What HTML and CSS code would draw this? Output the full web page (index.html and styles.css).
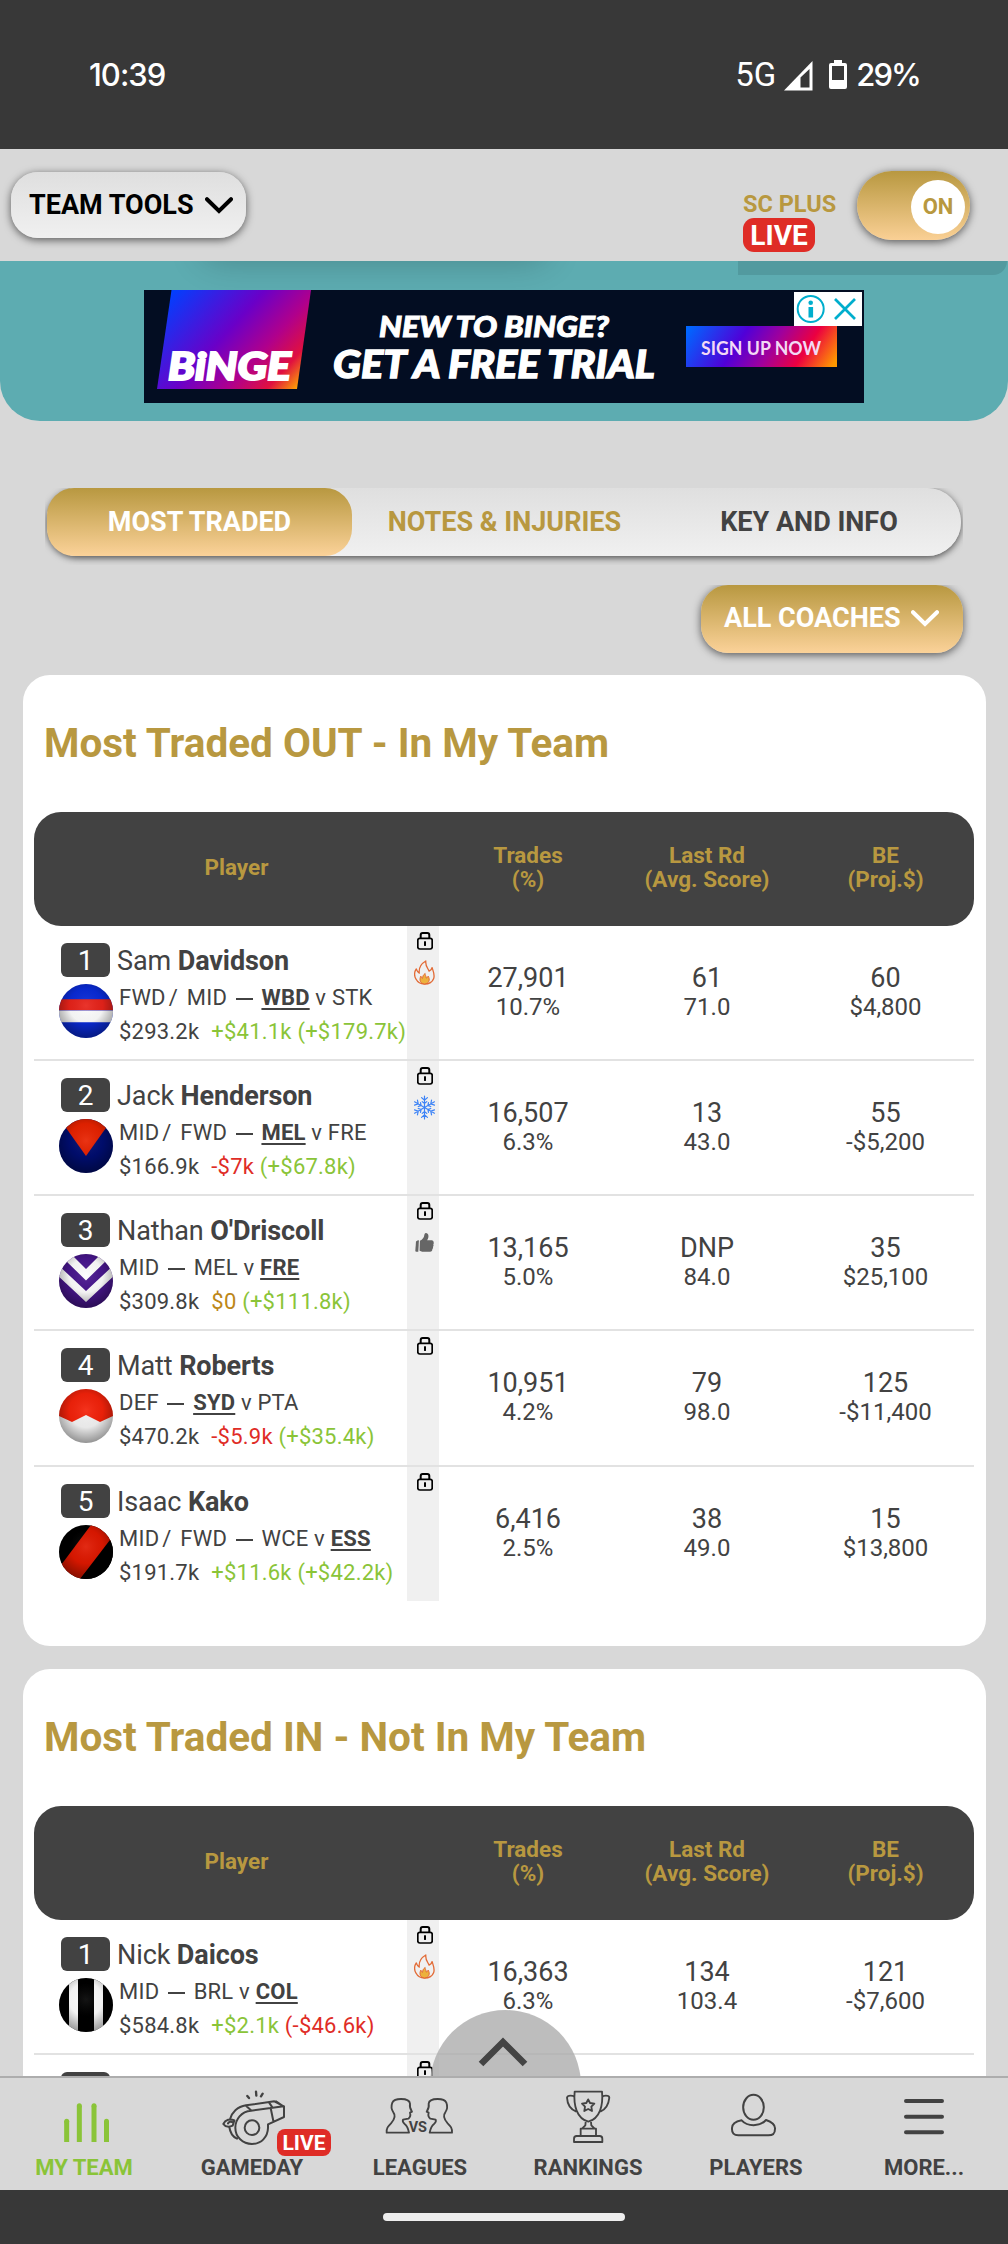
FILE: index.html
```html
<!DOCTYPE html>
<html lang="en">
<head>
<meta charset="utf-8">
<title>Most Traded</title>
<link rel="stylesheet" href="styles.css">
</head>
<body>
<svg class="defs" aria-hidden="true">
  <defs>
    <radialGradient id="shade" cx=".5" cy=".4" r=".62">
      <stop offset="0" stop-color="#fff" stop-opacity=".08"/>
      <stop offset=".5" stop-color="#000" stop-opacity=".05"/>
      <stop offset="1" stop-color="#000" stop-opacity=".42"/>
    </radialGradient>
    <clipPath id="disc"><circle cx="27" cy="27" r="27"/></clipPath>
    <symbol id="chevron" viewBox="0 0 28 17"><path d="M2 2.2 14 14 26 2.2" fill="none" stroke="currentColor" stroke-width="4" stroke-linecap="round"/></symbol>
    <symbol id="lock" viewBox="0 0 16 18">
      <path d="M3.7 6.500V3Q3.700 1 5.700 1H10.300Q12.300 1 12.300 3V6.500" fill="none" stroke="#000" stroke-width="2"/>
      <rect x=".8" y="6.300" width="14.400" height="10.700" rx="2" fill="none" stroke="#000" stroke-width="1.700"/>
      <rect x="7" y="9.300" width="2" height="4.600"/>
    </symbol>
    <symbol id="fire" viewBox="0 0 64 76">
      <path d="M36 3C24 10 14 22 16 40C11 38 9 33 7 27C1 36 1 49 6 58C11 68 20 73 32 73C46 73 56 67 60 56C64 45 59 35 55 23C54 29 52 31 46 34C42 24 34 18 36 3Z" fill="none" stroke="#e26a35" stroke-width="4" stroke-linejoin="round"/>
      <path d="M34 41C27 46 27 50 26 56C22 54 22 52 21 49C15 60 19 72 32 73C46 72 50 60 43 49C42 53 40 54 37 55C38 49 33 46 34 41Z" fill="#ecb13d" stroke="#e26a35" stroke-width="3"/>
    </symbol>
    <symbol id="snow" viewBox="-32 -37 64 74">
      <g fill="none" stroke="#3b82f6" stroke-width="3.600" stroke-linecap="round">
        <g id="arm"><path d="M0 0V-35M-9-30 0-22 9-30M-7-18 0-12 7-18"/></g>
        <use href="#arm" transform="rotate(60)"/><use href="#arm" transform="rotate(120)"/><use href="#arm" transform="rotate(180)"/><use href="#arm" transform="rotate(240)"/><use href="#arm" transform="rotate(300)"/>
      </g>
    </symbol>
    <symbol id="thumb" viewBox="0 0 58 58">
      <path d="M3 26Q7 22 12 22L10 57H4Q1 57 1 54Z" fill="#666"/>
      <path d="M15 24Q27 19 29 4Q30 0 34 0Q42 2 41 12Q40 18 37 22H52Q57 23 57 28Q58 32 56 34Q58 39 55 42Q56 47 53 49Q53 57 46 57H22L14 54Z" fill="#666"/>
    </symbol>
  </defs>
</svg>

<div class="screen">
  <div class="status">
    <span class="clock">10:39</span>
    <span class="net">5G</span>
    <svg class="signal" viewBox="0 0 29 30"><path d="M28.500 0V29.500H0Z" fill="#fff"/><path d="M16.500 16.500 25.500 8V26.500H16.500Z" fill="#383838"/></svg>
    <svg class="battery" viewBox="0 0 18 29"><path d="M5 0h8v3h3q2 0 2 2v22q0 2-2 2H2q-2 0-2-2V5q0-2 2-2h3z" fill="#fff"/><path d="M3 6h12v14H3z" fill="#383838"/></svg>
    <span class="pct">29%</span>
  </div>

  <header class="topbar">
    <button class="pill tools"><span>TEAM TOOLS</span><svg class="chev"><use href="#chevron"/></svg></button>
    <div class="plus"><span class="plus-name">SC PLUS</span><span class="live">LIVE</span></div>
    <div class="toggle"><span class="knob">ON</span></div>
  </header>

  <main>
    <section class="promo">
      <div class="promo-glow"></div>
      <div class="promo-tab"></div>
      <svg class="ad" viewBox="144 290 720 113">
        <defs>
          <linearGradient id="g1" gradientUnits="userSpaceOnUse" x1="172" y1="290" x2="291" y2="398">
            <stop offset="0" stop-color="#0040ff"/><stop offset=".43" stop-color="#6a00c8"/><stop offset=".67" stop-color="#b0008c"/><stop offset=".85" stop-color="#e01040"/><stop offset="1" stop-color="#ffae00"/>
          </linearGradient>
          <linearGradient id="g2" gradientUnits="userSpaceOnUse" x1="702" y1="308" x2="820" y2="385">
            <stop offset="0" stop-color="#0066ff"/><stop offset=".35" stop-color="#5000d8"/><stop offset=".57" stop-color="#a0009c"/><stop offset=".78" stop-color="#ec0040"/><stop offset="1" stop-color="#ff9800"/>
          </linearGradient>
        </defs>
        <path d="M144 290h720v113H144z" fill="#030d22"/>
        <path d="M171.500 290H311L297 389H157Z" fill="url(#g1)"/>
        <g class="ad-text" fill="#fff">
          <text x="168" y="379.500" font-size="38" textLength="123" lengthAdjust="spacingAndGlyphs" stroke="#fff" stroke-width="2">BiNGE</text>
          <text x="379" y="337" font-size="29" textLength="230" lengthAdjust="spacingAndGlyphs" stroke="#fff" stroke-width="1">NEW TO BINGE?</text>
          <text x="333" y="378" font-size="37" textLength="322" lengthAdjust="spacingAndGlyphs" stroke="#fff" stroke-width="1.300">GET A FREE TRIAL</text>
        </g>
        <path d="M686 326h151v41H686z" fill="url(#g2)"/>
        <text class="ad-cta" x="701" y="355" font-size="18" textLength="120" lengthAdjust="spacingAndGlyphs" fill="#f3d9f5">SIGN UP NOW</text>
        <path d="M794 292h68v34h-68z" fill="#fff"/>
        <g fill="none" stroke="#00aecd" stroke-width="2"><circle cx="810.700" cy="309" r="13"/><path d="M835 299 855 319M855 299 835 319" stroke-width="2.700"/></g>
        <circle cx="810.700" cy="302.700" r="2.300" fill="#00aecd"/><path d="M808.500 307h4.600v10.500h-4.600z" fill="#00aecd"/>
      </svg>
    </section>

    <div class="tabs-wrap">
      <nav class="tabs">
        <span class="tab on">MOST TRADED</span><span class="tab gold">NOTES &amp; INJURIES</span><span class="tab">KEY AND INFO</span>
      </nav>
    </div>
    <div class="filter-wrap">
      <button class="pill filter"><span>ALL COACHES</span><svg class="chev"><use href="#chevron"/></svg></button>
    </div>

    <section class="card">
      <h2>Most Traded OUT - In My Team</h2>
      <div class="cols head"><div class="head-player">Player</div><div>Trades<br>(%)</div><div>Last Rd<br>(Avg. Score)</div><div>BE<br>(Proj.$)</div></div>

      <div class="cols row">
        <div class="player">
          <div class="name"><b class="rank">1</b><span>Sam <b>Davidson</b></span></div>
          <div class="info">
            <svg class="flag" viewBox="0 0 54 54"><g clip-path="url(#disc)"><path d="M0 0h54v54H0z" fill="#0a2bd8"/><path d="M0 15.300h54v11H0z" fill="#e8231a"/><path d="M0 26.600h54v11.700H0z" fill="#fff"/><path d="M0 0h54v54H0z" fill="url(#shade)"/></g></svg>
            <div><p>FWD<i>/</i> MID <s></s> <u>WBD</u> v STK</p><p><span class="price">$293.2k</span><span class="up">+$41.1k (+$179.7k)</span></p></div>
          </div>
        </div>
        <div class="marks"><svg class="lock"><use href="#lock"/></svg><svg class="mark"><use href="#fire"/></svg></div>
        <div class="stat"><p>27,901</p><p>10.7%</p></div><div class="stat"><p>61</p><p>71.0</p></div><div class="stat"><p>60</p><p>$4,800</p></div>
      </div>

      <div class="cols row">
        <div class="player">
          <div class="name"><b class="rank">2</b><span>Jack <b>Henderson</b></span></div>
          <div class="info">
            <svg class="flag" viewBox="0 0 54 54"><g clip-path="url(#disc)"><path d="M0 0h54v54H0z" fill="#000d70"/><path d="M0-1H54L27 37Z" fill="#e82200"/><path d="M0 0h54v54H0z" fill="url(#shade)"/></g></svg>
            <div><p>MID<i>/</i> FWD <s></s> <u>MEL</u> v FRE</p><p><span class="price">$166.9k</span><span class="down">-$7k</span> <span class="up">(+$67.8k)</span></p></div>
          </div>
        </div>
        <div class="marks"><svg class="lock"><use href="#lock"/></svg><svg class="mark"><use href="#snow"/></svg></div>
        <div class="stat"><p>16,507</p><p>6.3%</p></div><div class="stat"><p>13</p><p>43.0</p></div><div class="stat"><p>55</p><p>-$5,200</p></div>
      </div>

      <div class="cols row">
        <div class="player">
          <div class="name"><b class="rank">3</b><span>Nathan <b>O'Driscoll</b></span></div>
          <div class="info">
            <svg class="flag" viewBox="0 0 54 54"><g clip-path="url(#disc)"><path d="M0 0h54v54H0z" fill="#48168e"/><path d="M3-9 27 15 51-9V3L27 26.500 3 3Z" fill="#fff"/><path d="M-3 9 27 37 57 9V20L27 48-3 20Z" fill="#fff"/><path d="M0 0h54v54H0z" fill="url(#shade)"/></g></svg>
            <div><p>MID <s></s> MEL v <u>FRE</u></p><p><span class="price">$309.8k</span><span class="flat">$0</span> <span class="up">(+$111.8k)</span></p></div>
          </div>
        </div>
        <div class="marks"><svg class="lock"><use href="#lock"/></svg><svg class="mark thumb"><use href="#thumb"/></svg></div>
        <div class="stat"><p>13,165</p><p>5.0%</p></div><div class="stat"><p>DNP</p><p>84.0</p></div><div class="stat"><p>35</p><p>$25,100</p></div>
      </div>

      <div class="cols row tall">
        <div class="player">
          <div class="name"><b class="rank">4</b><span>Matt <b>Roberts</b></span></div>
          <div class="info">
            <svg class="flag" viewBox="0 0 54 54"><g clip-path="url(#disc)"><path d="M0 0h54v54H0z" fill="#f4f4f4"/><path d="M0 0H54V27L41 33 27 26 13 33 0 27Z" fill="#f4220a"/><path d="M0 0h54v54H0z" fill="url(#shade)"/></g></svg>
            <div><p>DEF <s></s> <u>SYD</u> v PTA</p><p><span class="price">$470.2k</span><span class="down">-$5.9k</span> <span class="up">(+$35.4k)</span></p></div>
          </div>
        </div>
        <div class="marks"><svg class="lock"><use href="#lock"/></svg></div>
        <div class="stat"><p>10,951</p><p>4.2%</p></div><div class="stat"><p>79</p><p>98.0</p></div><div class="stat"><p>125</p><p>-$11,400</p></div>
      </div>

      <div class="cols row last">
        <div class="player">
          <div class="name"><b class="rank">5</b><span>Isaac <b>Kako</b></span></div>
          <div class="info">
            <svg class="flag" viewBox="0 0 54 54"><g clip-path="url(#disc)"><path d="M0 0h54v54H0z" fill="#000"/><path d="M32 0H66L21 54-10 56Z" fill="#e01800"/><path d="M54 11 18 58H54Z" fill="#000"/><path d="M0 0h54v54H0z" fill="url(#shade)"/></g></svg>
            <div><p>MID<i>/</i> FWD <s></s> WCE v <u>ESS</u></p><p><span class="price">$191.7k</span><span class="up">+$11.6k (+$42.2k)</span></p></div>
          </div>
        </div>
        <div class="marks"><svg class="lock"><use href="#lock"/></svg></div>
        <div class="stat"><p>6,416</p><p>2.5%</p></div><div class="stat"><p>38</p><p>49.0</p></div><div class="stat"><p>15</p><p>$13,800</p></div>
      </div>
    </section>

    <section class="card">
      <h2>Most Traded IN - Not In My Team</h2>
      <div class="cols head"><div class="head-player">Player</div><div>Trades<br>(%)</div><div>Last Rd<br>(Avg. Score)</div><div>BE<br>(Proj.$)</div></div>

      <div class="cols row">
        <div class="player">
          <div class="name"><b class="rank">1</b><span>Nick <b>Daicos</b></span></div>
          <div class="info">
            <svg class="flag" viewBox="0 0 54 54"><g clip-path="url(#disc)"><path d="M0 0h54v54H0z" fill="#000"/><path d="M10 0h9v54h-9zM35 0h9v54h-9z" fill="#fff"/><path d="M0 0h54v54H0z" fill="url(#shade)"/></g></svg>
            <div><p>MID <s></s> BRL v <u>COL</u></p><p><span class="price">$584.8k</span><span class="up">+$2.1k</span> <span class="down">(-$46.6k)</span></p></div>
          </div>
        </div>
        <div class="marks"><svg class="lock"><use href="#lock"/></svg><svg class="mark"><use href="#fire"/></svg></div>
        <div class="stat"><p>16,363</p><p>6.3%</p></div><div class="stat"><p>134</p><p>103.4</p></div><div class="stat"><p>121</p><p>-$7,600</p></div>
      </div>
      <div class="cols row">
        <div class="player"><div class="name"><b class="rank"></b></div></div>
        <div class="marks"><svg class="lock"><use href="#lock"/></svg></div>
      </div>
    </section>

    <div class="to-top"><svg viewBox="0 0 50 30"><path d="M3 27 25 5 47 27" fill="none" stroke="#444" stroke-width="6.500"/></svg></div>
  </main>

  <nav class="bottom">
    <div class="item active">
      <svg viewBox="0 534 504 228"><path d="M200 726V664M238 726V617M282 726V617M319.500 726V664" stroke="#8ac438" stroke-width="15"/><g fill="#8ac438"><circle cx="200" cy="664" r="7.500"/><circle cx="238" cy="617" r="7.500"/><circle cx="282" cy="617" r="7.500"/><circle cx="319.500" cy="664" r="7.500"/></g></svg>
      <span>MY TEAM</span>
    </div>
    <div class="item">
      <svg viewBox="504 534 504 228"><g fill="none" stroke="#424242" stroke-width="6" stroke-linecap="round" stroke-linejoin="round">
        <circle cx="756" cy="683" r="22"/>
        <path d="M753 632 812 624M753 632C724 634 706 658 706 683C706 711 728 732 756 732C784 732 803 711 804 684V673L852 651V619L823 604 738 616C712 620 695 638 690 658M812 624 851 619M812 624 820 663M738 617 752 630M807 607 817 622M828 604 850 619M688 681C690 696 698 710 711 716M670 672C676 659 691 655 703 661L698 677C688 682 676 681 670 672ZM684 670C688 664 694 664 700 668"/>
        <path d="M742 588 747 594M768 575 769 587M788 581 783 589" stroke-width="7"/></g></svg>
      <span>GAMEDAY</span><b class="live small">LIVE</b>
    </div>
    <div class="item">
      <svg viewBox="1008 534 504 228"><g fill="none" stroke="#424242" stroke-width="5.500" stroke-linejoin="round" stroke-linecap="round">
        <path id="bust" d="M1227 698H1160C1159 683 1165 678 1173 670C1181 661 1190 649 1180 637C1174 628 1173 618 1177 608C1181 599 1190 597 1203 597C1218 597 1229 600 1230 611C1228 622 1231 628 1236 635L1230 638C1232 645 1229 653 1225 656L1209 659C1207 664 1209 668 1214 672C1222 678 1225 688 1227 698Z"/>
        <use href="#bust" transform="matrix(-1 0 0 1 2516 0)"/></g>
        <text x="1226" y="696" class="vs" textLength="55" lengthAdjust="spacingAndGlyphs">VS</text></svg>
      <span>LEAGUES</span>
    </div>
    <div class="item">
      <svg viewBox="0 534 504 228"><g fill="none" stroke="#424242" stroke-width="5.500" stroke-linejoin="round">
        <path d="M212 575H294C298 616 288 655 253 665C218 655 208 616 212 575ZM211 591C210 586 190 584 189 593C190 612 199 628 217 635M295 591C296 586 316 584 316 593C314 612 306 628 289 635M245 666 244 676 234 686H272L262 676 261 666M230 707V686H276V707M210 726V716Q210 708 218 708H287Q295 708 295 716V726Z"/>
        <path d="M252.500 598 258 609 271 611 262 620 264 633 252.500 627 241 633 243 620 234 611 247 609Z"/></g></svg>
      <span>RANKINGS</span>
    </div>
    <div class="item">
      <svg viewBox="504 534 504 228"><g fill="none" stroke="#424242" stroke-width="6" stroke-linejoin="round">
        <ellipse cx="748.500" cy="622" rx="31" ry="37.500"/>
        <path d="M713 661C730 680 767 681 786 660C806 667 814 674 813 686C813 702 806 706 793 706H703C690 706 683 700 684 684C684 672 694 665 713 661Z"/></g></svg>
      <span>PLAYERS</span>
    </div>
    <div class="item">
      <svg viewBox="1008 534 504 228"><path d="M1206 603H1314M1206 650H1314M1206 697H1314" stroke="#424242" stroke-width="12" stroke-linecap="round"/></svg>
      <span>MORE...</span>
    </div>
  </nav>
  <div class="gesture"><i></i></div>
</div>
</body>
</html>
```
FILE: styles.css
```css
* { box-sizing: border-box; }
body { margin: 0; font-family: Roboto, "Liberation Sans", sans-serif; color: #424242; background: #d8d8d8; }
p, h2 { margin: 0; }
button { border: 0; font: inherit; }
.defs { position: absolute; width: 0; height: 0; }
.screen { width: 1008px; height: 2244px; display: flex; flex-direction: column; overflow: hidden; }

.status { height: 149px; flex: none; background: #383838; color: #fff; display: flex; align-items: flex-start; padding: 56px 88px 0 89px; font: 500 31px/38px Inter, Roboto, sans-serif; }
.clock { margin-right: auto; letter-spacing: -1px; }
.net { font-family: Roboto, sans-serif; font-weight: 400; font-size: 33px; margin-right: 8px; }
.signal { width: 29px; height: 30px; margin: 5px 16px 0 0; }
.battery { width: 18px; height: 29px; margin: 4px 9px 0 0; }
.pct { letter-spacing: -1.9px; }

.topbar { height: 112px; flex: none; background: #d8d8d8; display: flex; align-items: flex-start; padding: 22px 38px 0 11px; position: relative; z-index: 1; }
.pill { display: flex; align-items: center; border-radius: 27px; font-weight: 700; font-size: 27px; line-height: 32px; box-shadow: 0 2px 8px rgba(0,0,0,.6); }
.chev { width: 28px; height: 17px; }
.tools { width: 235px; height: 66px; margin-top: 1px; padding: 0 13px 0 18px; justify-content: space-between; color: #000; background: linear-gradient(#dfdfdf, #f0f0f0); }
.plus { margin-left: auto; margin-right: 16px; padding-top: 20px; width: 98px; display: flex; flex-direction: column; align-items: flex-start; color: #b89840; font-weight: 700; }
.plus-name { font-size: 23.5px; line-height: 27px; white-space: nowrap; }
.live { background: #df2c26; color: #fff; font-weight: 700; width: 72px; height: 34px; border-radius: 11px; font-size: 28px; line-height: 35px; text-align: center; }
.toggle { width: 113px; height: 69px; border-radius: 35px; background: linear-gradient(#b89840, #fad095); box-shadow: 0 2px 8px rgba(0,0,0,.6); display: flex; justify-content: flex-end; padding: 9px 5px 0; }
.knob { width: 54px; height: 54px; border-radius: 50%; background: #fff; color: #b89840; font-weight: 700; font-size: 22px; line-height: 54px; text-align: center; }

main { flex: 1; min-height: 0; overflow: hidden; position: relative; background: #d8d8d8; border-bottom: 2px solid #adadad; }
.promo { height: 160px; background: #5dacb1; border-radius: 0 0 40px 40px; position: relative; overflow: hidden; display: flex; justify-content: center; padding-top: 29px; }
.promo-glow { position: absolute; left: 205px; top: -34px; width: 340px; height: 30px; border-radius: 30px; box-shadow: 0 0 34px 4px rgba(0,0,0,.22); }
.promo-tab { position: absolute; right: 1px; top: 0; width: 269px; height: 14px; background: #529a9f; border-radius: 0 0 22px 0; }
.ad { width: 720px; height: 113px; flex: none; position: relative; }
.ad-text { font-family: Lato, "Open Sans", sans-serif; font-weight: 900; font-style: italic; }
.ad-cta { font-family: Lato, sans-serif; font-weight: 700; }

.tabs-wrap { margin: 67px 45px 0; padding: 0 2px 9px; overflow: hidden; }
.tabs { height: 68px; display: grid; grid-template-columns: 305px 305px 304px; border-radius: 30px 34px 34px 30px; background: linear-gradient(#dfdfdf, #f0f0f0); box-shadow: 0 2px 7px rgba(0,0,0,.65); }
.tab { text-align: center; font-weight: 700; font-size: 27px; line-height: 68px; }
.tab.gold { color: #b89840; }
.tab.on { color: #fff; border-radius: 27px; background: linear-gradient(#b89840, #fbd299); }
.filter-wrap { margin-top: 20px; padding: 0 45px 12px 0; display: flex; justify-content: flex-end; overflow: hidden; }
.filter { width: 262px; height: 68px; padding: 0 24px 2px 23px; justify-content: space-between; color: #fff; background: linear-gradient(#b89840, #fbd299); }

.card { width: 963px; height: 971px; margin: 10px 0 0 23px; padding: 41px 12px 0 11px; background: #fff; border-radius: 27px; }
.card + .card { margin-top: 23px; }
.card h2 { height: 96px; padding-left: 10px; font-weight: 700; font-size: 40.5px; line-height: 54px; color: #b89840; }
.cols { display: grid; grid-template-columns: 373px 32px 178px 180px 177px; }
.head { height: 114px; align-items: center; border-radius: 27px; background: #424242; color: #b89840; font-weight: 700; font-size: 22.5px; line-height: 23.5px; text-align: center; padding-bottom: 3px; }
.head-player { grid-column: span 2; }
.row { height: 135px; border-bottom: 2px solid #e2e2e2; }
.row.tall { height: 136px; }
.row.last { height: 134px; border: 0; }
.player { padding: 17px 0 0 27px; white-space: nowrap; }
.name { display: flex; height: 34px; font-size: 27px; line-height: 36px; gap: 7px; font-weight: 400; letter-spacing: -.1px; }
.rank { width: 49px; height: 34px; border-radius: 6px; background: #424242; color: #fff; font-weight: 400; font-size: 28px; text-align: center; }
.info { display: flex; margin: 4px 0 0 -2px; font-size: 22px; line-height: 34px; letter-spacing: .22px; }
.flag { width: 54px; height: 54px; margin: 3px 6px 0 0; }
.info i { font-style: normal; margin: 0 3px; }
.info s { display: inline-block; width: 17px; height: 2px; background: #424242; vertical-align: 5px; margin: 0 3px; }
.info u { font-weight: 700; text-decoration-thickness: 2px; text-underline-offset: 3px; }
.price { margin-right: 12px; }
.up { color: #8ac438; } .down { color: #df2c26; } .flat { color: #bd8718; }
.marks { background: #f0f0f0; display: flex; flex-direction: column; align-items: center; padding-top: 6px; }
.lock { width: 16px; height: 18px; margin: 0 0 10px 4px; flex: none; }
.mark { width: 21px; height: 25px; margin-left: 2px; flex: none; }
.thumb { width: 19px; height: 19px; margin-top: 3px; }
.stat { padding-top: 36px; text-align: center; font-size: 27px; line-height: 32px; }
.stat p + p { font-size: 24px; line-height: 27px; }

.to-top { position: absolute; left: 429.5px; top: 1749px; width: 151px; height: 151px; border-radius: 50%; background: rgba(173,173,173,.8); }
.to-top svg { display: block; width: 50px; height: 30px; margin: 27px 0 0 48px; }

.bottom { height: 112px; flex: none; background: #d8d8d8; display: grid; grid-template-columns: repeat(6, 1fr); }
.item { position: relative; text-align: center; font-weight: 700; font-size: 22px; line-height: 28px; }
.item svg { display: block; width: 168px; height: 76px; }
.item.active { color: #8ac438; }
.live.small { position: absolute; left: 109px; top: 51px; width: 54px; height: 27px; border-radius: 8px; font-size: 21px; line-height: 28px; }
.vs { font: 700 43px Roboto, sans-serif; fill: #424242; }
.gesture { height: 54px; flex: none; background: #383838; display: flex; justify-content: center; padding-top: 23px; }
.gesture i { width: 242px; height: 8px; border-radius: 4px; background: #eee; }
```
